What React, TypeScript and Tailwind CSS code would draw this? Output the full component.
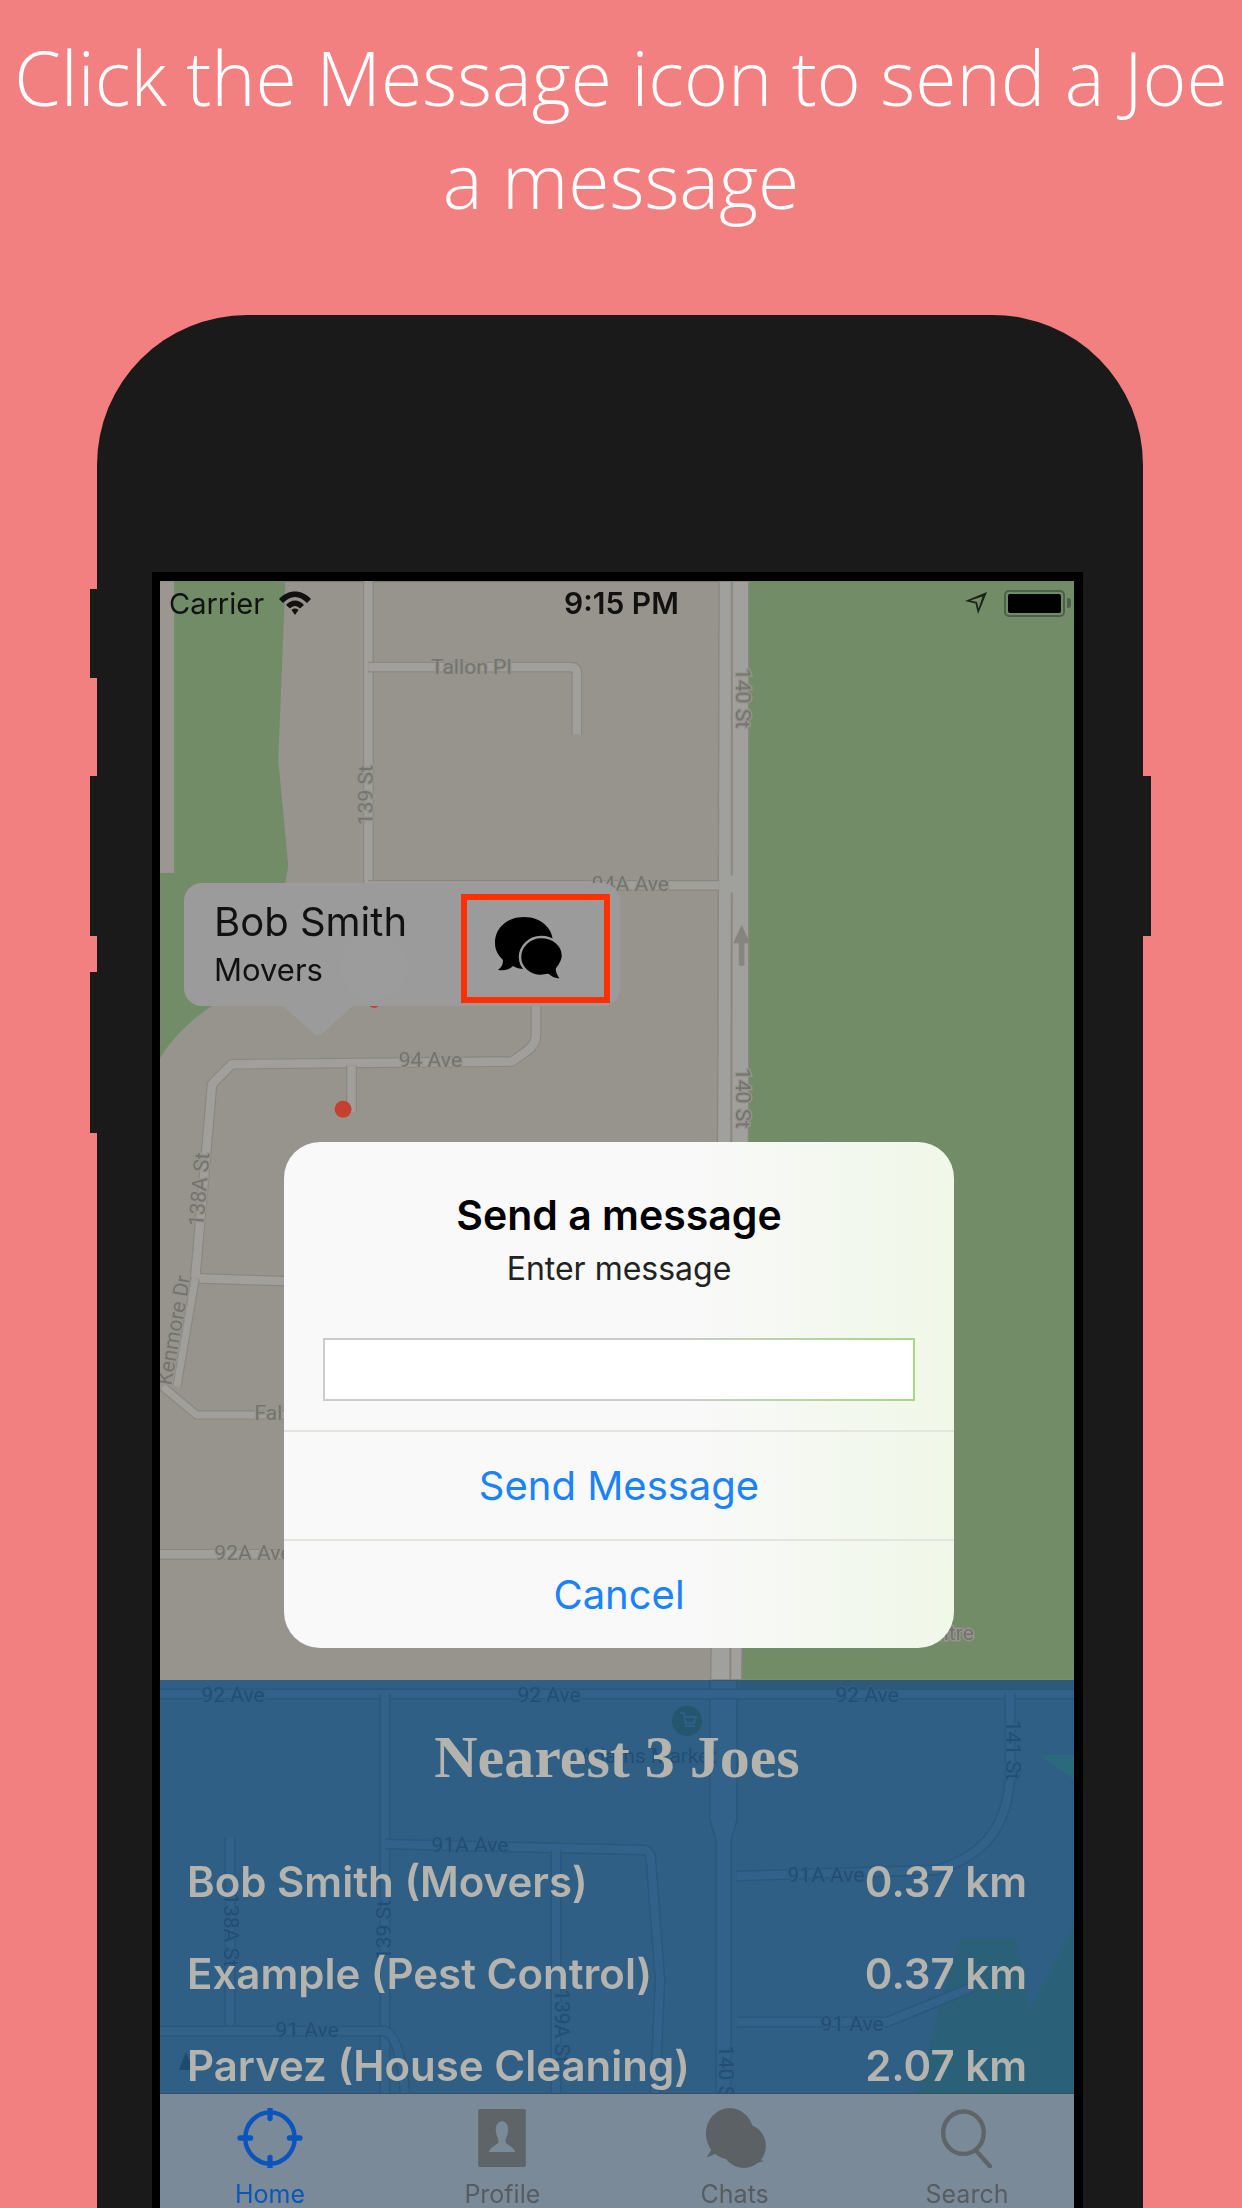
import React from 'react'

const Road = ({ d, w = 6 }: { d: string; w?: number }) => (
  <>
    <path d={d} fill="none" stroke="#8a877f" strokeWidth={w + 1.6} strokeLinejoin="round" />
    <path d={d} fill="none" stroke="#a09f9b" strokeWidth={w} strokeLinejoin="round" />
  </>
)

const MapLabel = ({ x, y, r = 0, children }: { x: number; y: number; r?: number; children: string }) => (
  <text
    x={x}
    y={y}
    transform={r ? `rotate(${r} ${x} ${y})` : undefined}
    textAnchor="middle"
    dominantBaseline="middle"
    fontFamily="Roboto, sans-serif"
    fontSize="15"
    fill="#73736f"
    stroke="#96948c"
    strokeWidth="2"
    paintOrder="stroke"
  >
    {children}
  </text>
)

// the upper part of the map, drawn in the coordinates of the shrunk screenshot
const UpperMap = () => (
  <svg className="absolute inset-0" width="914" height="1627" viewBox="114 413 649 1155">
    <rect x="114" y="413" width="649" height="1155" fill="#96948c" />
    <path d="M124 413 L203 413 L198 540 L205 615 L201 640 L201 690 C160 705 130 725 114 752 L114 620 L124 620 Z" fill="#738c68" />
    <path d="M532 413 L763 413 L763 1193 L527 1193 L532 760 Z" fill="#738c68" />
    <path d="M114 413 L124 413 L124 620 L114 620 Z" fill="#9b9690" />
    <path d="M511 413 L532 413 L532 790 L527 1193 L505 1193 L510 790 Z" fill="#a0a09d" stroke="#8a877f" strokeWidth="1" />
    <path d="M520 413 L520 622 M520 634 L519 1193" stroke="#8a877f" strokeWidth="1.4" fill="none" />
    <Road d="M262 413 L262 632" />
    <Road d="M262 474 L406 474 Q410 474 410 478 L410 522" />
    <Road d="M262 629 L511 629" />
    <Road d="M381 712 L381 735 Q381 742 374 747 L364 754 L165 756 L151 770 L139 908 L202 910" />
    <Road d="M250 757 L250 790" />
    <Road d="M139 908 L126 985 M116 985 L140 1005 L202 1005" w={5} />
    <Road d="M114 1104 L202 1104" />
    <path d="M527 657 L521 670 L525 670 L525 686 L529 686 L529 670 L533 670 Z" fill="#85847f" />
    <MapLabel x={335} y={475}>Tallon Pl</MapLabel>
    <MapLabel x={261} y={565} r={-90}>139 St</MapLabel>
    <MapLabel x={448} y={629}>94A Ave</MapLabel>
    <MapLabel x={527} y={496} r={90}>140 St</MapLabel>
    <MapLabel x={527} y={780} r={90}>140 St</MapLabel>
    <MapLabel x={306} y={754}>94 Ave</MapLabel>
    <MapLabel x={143} y={845} r={-85}>138A St</MapLabel>
    <MapLabel x={125} y={945} r={-80}>Kenmore Dr</MapLabel>
    <MapLabel x={191} y={1005}>Fal</MapLabel>
    <MapLabel x={180} y={1104}>92A Ave</MapLabel>
    <MapLabel x={670} y={1161}>Centre</MapLabel>
    <circle cx="244" cy="788" r="6" fill="#c5402f" />
    <circle cx="266" cy="712" r="4" fill="#c5402f" />
  </svg>
)

const PanelMap = () => {
  const line = '#32628a'
  const edge = '#2a587c'
  const roads = [
    'M0 14 L914 14',
    'M225 14 L225 413',
    'M225 164 L485 170 Q491 172 491 180 L500 300 L495 413',
    'M396 170 L396 413',
    'M577 196 L776 190 Q850 170 850 90 L850 14',
    'M0 351 L225 351 Q240 356 245 413',
    'M577 342 L727 342 L813 307',
    'M70 157 L70 345',
  ]
  const labels: [number, number, number, string][] = [
    [73, 16, 0, '92 Ave'],
    [389, 16, 0, '92 Ave'],
    [707, 16, 0, '92 Ave'],
    [310, 166, 0, '91A Ave'],
    [666, 196, 0, '91A Ave'],
    [147, 351, 0, '91 Ave'],
    [692, 345, 0, '91 Ave'],
    [70, 250, 90, '138A St'],
    [225, 250, -90, '139 St'],
    [401, 346, 90, '139A St'],
    [852, 70, 90, '141 St'],
    [565, 395, 90, '140 St'],
    [488, 77, 0, 'Adams Market'],
  ]
  return (
    <svg className="absolute inset-0" width="914" height="413" viewBox="0 0 914 413">
      <path d="M579 0 L914 0 L914 12 L579 12 Z" fill="#2d5a78" />
      <path d="M880 75 L914 75 L914 100 Z" fill="#2a6a7c" />
      <path d="M914 245 L870 330 L856 259 L800 259 L770 364 L758 413 L914 413 Z" fill="#2a6078" />
      <path d="M550 0 L577 0 L577 140 L571 160 L571 413 L556 413 L556 160 L550 140 Z" fill="#32628a" stroke={edge} strokeWidth="1.5" />
      {roads.map((d) => (
        <g key={d}>
          <path d={d} fill="none" stroke={edge} strokeWidth="11" strokeLinejoin="round" />
          <path d={d} fill="none" stroke={line} strokeWidth="8" strokeLinejoin="round" />
        </g>
      ))}
      {labels.map(([x, y, r, t]) => (
        <text
          key={t + x}
          x={x}
          y={y}
          transform={r ? `rotate(${r} ${x} ${y})` : undefined}
          textAnchor="middle"
          dominantBaseline="middle"
          fontFamily="Roboto, sans-serif"
          fontSize="21"
          fill="#234e73"
          stroke="#2f5f85"
          strokeWidth="3"
          paintOrder="stroke"
        >
          {t}
        </text>
      ))}
      <circle cx="527" cy="41" r="15" fill="#24566f" />
      <path d="M520 33 L524 33 L526 46 L535 46 M525 37 L536 37 L534 43 L526 43" fill="none" stroke="#2f5f85" strokeWidth="2" />
      <path d="M26 372 L33 390 L19 390 Z" fill="#1f4a6e" />
    </svg>
  )
}

const StatusBar = () => (
  <div className="relative flex h-[44px] items-center justify-between pl-[9px] pr-[3px] text-[#111] [font-family:Inter,sans-serif]">
    <div className="flex items-center gap-[14px]">
      <span className="text-[29px] leading-none">Carrier</span>
      <svg width="34" height="24" viewBox="0 0 32 24">
        <path d="M0 8 C9 -2 23 -2 32 8 L28 12 C20 4 12 4 4 12 Z" fill="#111" />
        <path d="M7 14 C12 8 20 8 25 14 L21 17.5 C18 14 14 14 11 17.5 Z" fill="#111" />
        <path d="M12.5 19 C14.5 17 17.5 17 19.5 19 L16 24 Z" fill="#111" />
      </svg>
    </div>
    <span className="absolute left-[404px] text-[30px] leading-none font-semibold">9:15 PM</span>
    <div className="flex items-center gap-[16px]">
      <svg width="24" height="24" viewBox="0 0 24 24">
        <path d="M23 1 L14 23 L11.5 12.5 L1 10 Z M18.5 5.5 L6.5 9.5 L13 11 L14.6 17.5 Z" fill="#1b2418" fillRule="evenodd" />
      </svg>
      <div className="flex items-center gap-[2px]">
        <div className="flex h-[27px] w-[61px] items-center rounded-[5px] border-2 border-[#4d6148] p-[2px]">
          <div className="h-full w-full rounded-[2px] bg-black" />
        </div>
        <div className="h-[10px] w-[4px] rounded-r-[3px] bg-[#4d6148]" />
      </div>
    </div>
  </div>
)

const Callout = () => (
  <div className="absolute left-[24px] top-[302px] h-[123px] w-[436px] rounded-[18px] bg-[#9b9b9b] pl-[30px] pt-[16px] text-[#111] [font-family:Inter,sans-serif]">
    <svg className="absolute left-[99px] top-[122px]" width="70" height="32" viewBox="0 0 74 32">
      <path d="M0 0 L74 0 L42 29 Q37 33 32 29 Z" fill="#9b9b9b" />
    </svg>
    <div className="absolute left-[156px] top-[49px] h-[68px] w-[68px] rounded-full bg-[#9d9c9c]" />
    <div className="relative text-[40px] leading-[46px]">Bob Smith</div>
    <div className="relative pt-[6px] text-[31px] leading-[38px]">Movers</div>
    <div className="absolute left-[277px] top-[11px] flex h-[109px] w-[149px] items-center justify-center border-[6px] border-[#ff2f00] pr-[14px]">
      <svg width="68" height="64" viewBox="0 0 68 64">
        <path d="M29 0 C46 0 58 11 58 26 C58 40 46 52 29 52 C25 52 21 51 18 49 C14 53 9 54 3 53 C7 50 8 47 8 43 C3 38 0 33 0 26 C0 11 12 0 29 0 Z" fill="#000" />
        <path d="M46 20 C58 20 68 28 68 39 C68 44 65 48 62 52 C62 56 64 59 67 63 C61 63 56 61 53 58 C51 58 48 59 46 59 C35 59 25 51 25 40 C25 29 35 20 46 20 Z" fill="#000" stroke="#9b9b9b" strokeWidth="2.5" />
      </svg>
    </div>
  </div>
)

const MessageDialog = () => (
  <div className="absolute left-[124px] top-[561px] flex h-[506px] w-[670px] flex-col rounded-[36px] bg-gradient-to-r from-[#f9f9f9] from-60% to-[#f0f8e8] text-center [font-family:Inter,sans-serif]">
    <div className="pt-[50px] text-[41px] leading-[46px] font-semibold text-black">Send a message</div>
    <div className="pt-[11px] text-[32px] leading-[40px] text-[#222]">Enter message</div>
    <div className="mx-[39px] mt-[49px] h-[63px] bg-gradient-to-r from-[#cccccc] from-60% to-[#a8d880] p-[2px]">
      <div className="h-full w-full bg-white" />
    </div>
    <div className="mt-[29px] flex h-[109px] items-center justify-center border-t-2 border-[#e3e5de] text-[40px] text-[#1a82fb]">Send Message</div>
    <div className="flex h-[109px] items-center justify-center border-t-2 border-[#e3e5de] text-[40px] text-[#1a82fb]">Cancel</div>
  </div>
)

const rows = [
  ['Bob Smith (Movers)', '0.37 km'],
  ['Example (Pest Control)', '0.37 km'],
  ['Parvez (House Cleaning)', '2.07 km'],
]

const NearestPanel = () => (
  <div className="relative h-[413px] overflow-hidden bg-[#2f5f85]">
    <PanelMap />
    <div className="relative pt-[42px] text-center text-[60px] leading-[70px] font-bold text-[#b4b3ad] [font-family:'Liberation_Serif',serif]">
      Nearest 3 Joes
    </div>
    <div className="relative mt-[66px] flex flex-col gap-[44px] pl-[27px] pr-[47px] [font-family:Inter,sans-serif]">
      {rows.map(([name, km]) => (
        <div key={name} className="flex h-[48px] items-center justify-between text-[42px] leading-[48px] font-semibold text-[#b4b3ad]">
          <span>{name}</span>
          <span>{km}</span>
        </div>
      ))}
    </div>
  </div>
)

const TabBar = () => (
  <div className="flex h-[115px] justify-between border-t border-[#3c4c5a] bg-[#7a8a99] pl-[70px] pr-[67px] pt-[14px] [font-family:Inter,sans-serif]">
    <div className="flex w-[80px] flex-col items-center gap-[12px] text-[25px] leading-[28px] text-[#0b57b8]">
      <svg width="70" height="68" viewBox="0 0 70 68" fill="none" stroke="#0a55bd">
        <ellipse cx="35" cy="34" rx="28" ry="29" strokeWidth="5" />
        <path d="M35 0 L35 12 M35 56 L35 68 M1 34 L13 34 M57 34 L69 34" strokeWidth="6" strokeLinecap="round" />
      </svg>
      <span>Home</span>
    </div>
    <div className="flex w-[80px] flex-col items-center gap-[12px] text-[25px] leading-[28px] text-[#565c61]">
      <svg width="54" height="68" viewBox="0 0 54 68">
        <rect width="54" height="66" y="1" rx="2" fill="#5f6468" />
        <path d="M27 15 C32 15 34 20 34 25 C34 31 31 34 31 38 C31 42 40 43 42 50 L12 50 C14 43 23 42 23 38 C23 34 20 31 20 25 C20 20 22 15 27 15 Z" fill="#7a8a99" />
      </svg>
      <span>Profile</span>
    </div>
    <div className="flex w-[80px] flex-col items-center gap-[12px] text-[25px] leading-[28px] text-[#565c61]">
      <svg width="70" height="68" viewBox="0 0 70 68">
        <ellipse cx="29" cy="29" rx="27" ry="29" fill="#5c6166" />
        <path d="M10 44 L3 56 L18 50 Z" fill="#5c6166" />
        <ellipse cx="45" cy="43" rx="25" ry="25" fill="#5c6166" />
        <path d="M60 58 L68 60 L58 63 Z" fill="#5c6166" />
      </svg>
      <span>Chats</span>
    </div>
    <div className="flex w-[80px] flex-col items-center gap-[12px] text-[25px] leading-[28px] text-[#565c61]">
      <svg width="60" height="68" viewBox="0 0 60 68" fill="none" stroke="#5f6468" strokeWidth="5">
        <ellipse cx="26" cy="28" rx="23" ry="24" />
        <path d="M40 48 L56 66" strokeLinecap="round" />
      </svg>
      <span>Search</span>
    </div>
  </div>
)

const App = () => {
  return (
    <div className="flex h-[2208px] w-[1242px] flex-col items-center overflow-hidden bg-[#f38080]">
      <h1 className="pt-[26px] text-center text-[75px] leading-[103px] font-light whitespace-nowrap text-white [font-family:'Open_Sans',sans-serif]">
        Click the Message icon to send a Joe
        <br />
        a message
      </h1>
      <div className="relative mr-[2px] mt-[83px] flex w-[1046px] flex-1 justify-center rounded-t-[150px] bg-[#1a1a1a] pr-[5px] pt-[257px]">
        <div className="absolute left-[-7px] top-[274px] h-[89px] w-[7px] bg-[#1a1a1a]" />
        <div className="absolute left-[-7px] top-[461px] h-[160px] w-[7px] bg-[#1a1a1a]" />
        <div className="absolute left-[-7px] top-[657px] h-[161px] w-[7px] bg-[#1a1a1a]" />
        <div className="absolute right-[-8px] top-[461px] h-[160px] w-[8px] bg-[#1a1a1a]" />
        <div className="h-[1636px] w-[931px] bg-black px-[8px] pt-[9px]">
          <div className="relative flex h-[1627px] w-[914px] flex-col overflow-hidden blur-[0.6px]">
            <UpperMap />
            <div className="relative">
              <StatusBar />
            </div>
            <div className="flex-1" />
            <div className="relative">
              <NearestPanel />
              <TabBar />
            </div>
            <Callout />
            <MessageDialog />
          </div>
        </div>
      </div>
    </div>
  )
}

export default App
